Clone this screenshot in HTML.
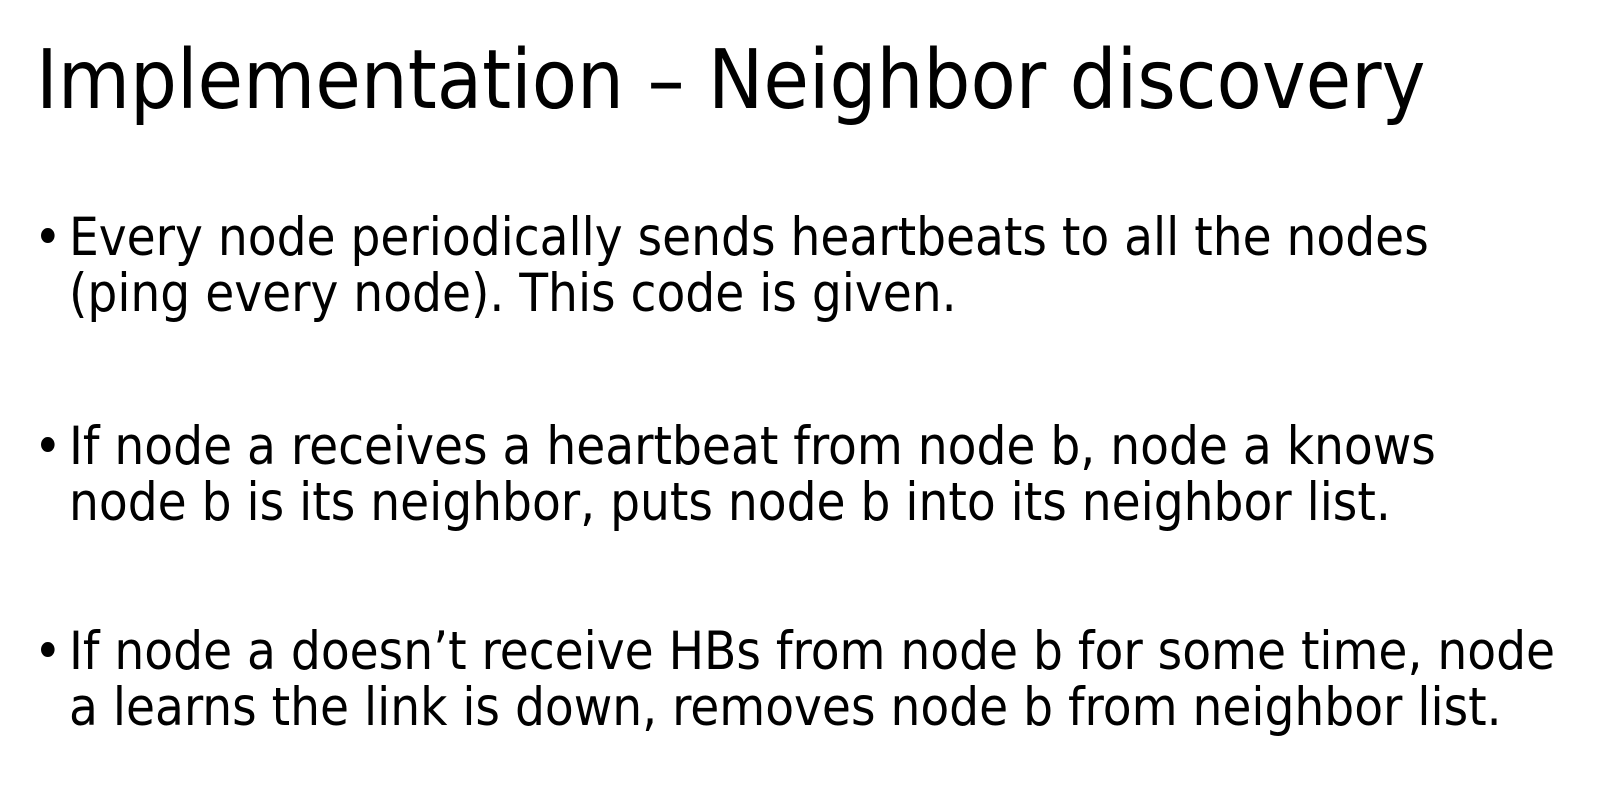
<!DOCTYPE html>
<html><head><meta charset="utf-8"><style>
html,body{margin:0;padding:0;background:#fff;width:1606px;height:794px;overflow:hidden}
body{font-family:"DejaVu Sans Condensed","DejaVu Sans","Liberation Sans",sans-serif;color:#000;position:relative}
.t{position:absolute;left:36px;top:38px;font-size:82.3px;line-height:86px;white-space:nowrap}
.b{position:absolute;left:69px;font-size:52.4px;line-height:56px;white-space:nowrap}
.d{position:absolute;left:34px;font-size:52px;line-height:56px}
</style></head><body>
<div class="t">Implementation – Neighbor discovery</div>
<div class="d" style="top:210px">•</div>
<div class="b" style="top:210px">Every node periodically sends heartbeats to all the nodes<br>(ping every node). This code is given.</div>
<div class="d" style="top:419px">•</div>
<div class="b" style="top:419px">If node a receives a heartbeat from node b, node a knows<br>node b is its neighbor, puts node b into its neighbor list.</div>
<div class="d" style="top:624px">•</div>
<div class="b" style="top:624px">If node a doesn’t receive HBs from node b for some time, node<br>a learns the link is down, removes node b from neighbor list.</div>
</body></html>
